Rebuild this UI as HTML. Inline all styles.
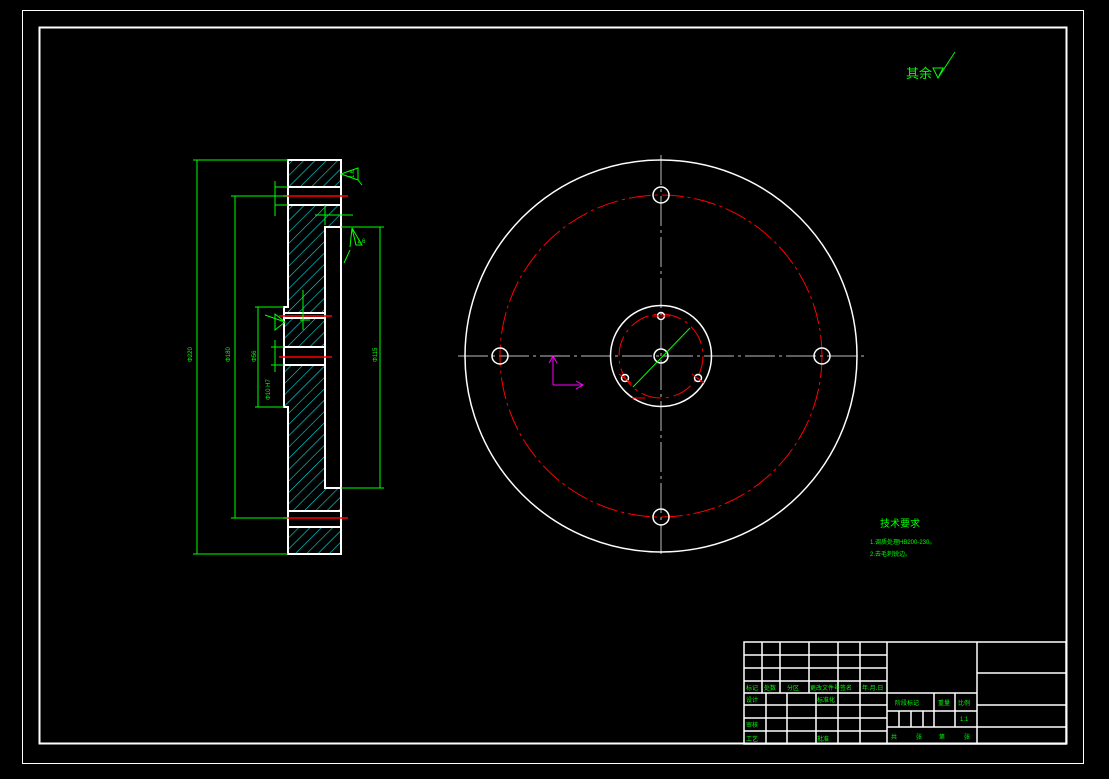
<!DOCTYPE html>
<html><head><meta charset="utf-8"><style>
html,body{margin:0;padding:0;background:#000;}
svg{display:block}
text{font-family:"Liberation Sans","Noto Sans CJK SC",sans-serif;fill:#00ff00}
</style></head><body>
<svg width="1109" height="779" viewBox="0 0 1109 779" xmlns="http://www.w3.org/2000/svg">
<defs>
<pattern id="h" width="8" height="8" patternUnits="userSpaceOnUse" patternTransform="rotate(45)">
<line x1="0" y1="0" x2="0" y2="8" stroke="#00e0e0" stroke-width="1.2"/>
</pattern>
</defs>
<rect x="0" y="0" width="1109" height="779" fill="#000"/>
<rect x="22.5" y="10.5" width="1061" height="753" fill="none" stroke="#fff" stroke-width="1"/>
<rect x="39.5" y="27.5" width="1027" height="716" fill="none" stroke="#fff" stroke-width="2"/>

<text x="906" y="78" font-size="13">其余</text>
<path d="M933 68 L943 68 L938 78 Z M938 78 L955 52" fill="none" stroke="#00ff00" stroke-width="1"/>

<g fill="url(#h)">
<rect x="288" y="160" width="53" height="27"/>
<rect x="288" y="205" width="53" height="22"/>
<rect x="288" y="227" width="37" height="80"/>
<rect x="284" y="307" width="41" height="6"/>
<rect x="284" y="318" width="41" height="29"/>
<rect x="284" y="365" width="41" height="42"/>
<rect x="288" y="407" width="37" height="81"/>
<rect x="288" y="488" width="53" height="23"/>
<rect x="288" y="527" width="53" height="27"/>
</g>
<g fill="none" stroke="#fff" stroke-width="2">
<path d="M288 160 H341 V554 H288 V407 H284 V307 H288 Z"/>
<path d="M341 227 H325 V488 H341"/>
<path d="M288 187 H341 M288 205 H341 M288 511 H341 M288 527 H341"/>
<path d="M284 313 H325 M284 318 H325 M284 347 H325 M284 365 H325"/>
</g>
<g stroke="#ff0000" stroke-width="1.5">
<line x1="283" y1="196" x2="348" y2="196"/>
<line x1="283" y1="518" x2="348" y2="518"/>
<line x1="279" y1="316" x2="332" y2="316"/>
<line x1="279" y1="357" x2="332" y2="357"/>
</g>
<g stroke="#00ff00" stroke-width="1" fill="none">
<path d="M193 160 H288 M193 554 H288 M197 160 V554"/>
<path d="M231 196 H288 M231 518 H288 M235 196 V518"/>
<path d="M255 307 H284 M255 407 H284 M258 307 V407"/>
<path d="M341 227 H384 M341 488 H384 M380 227 V488"/>
<path d="M275 181 V216 M275 187 H288 M275 205 H288"/>
<path d="M275 340 V372 M271 347 H284 M271 365 H284"/>
<path d="M315 215 H353 M325 205 V225 M303 290 V330 M300 320 H310"/>
<path d="M341 174 L358 168 V180 Z M358 180 L362 185"/>
<path d="M352 228 L362 245 L356 245 Z M352 228 L350 247 M350 250 L344 263"/>
<path d="M275 314 L285 322 L275 330 Z M265 315 L285 322"/>
</g>
<g font-size="6">
<text x="192" y="362" transform="rotate(-90 192 362)">Φ220</text>
<text x="230" y="362" transform="rotate(-90 230 362)">Φ180</text>
<text x="256" y="362" transform="rotate(-90 256 362)">Φ56</text>
<text x="377" y="362" transform="rotate(-90 377 362)">Φ115</text>
<text x="270" y="400" transform="rotate(-90 270 400)">Φ10 H7</text>
<text x="354" y="178" transform="rotate(-90 354 178)">1.6</text>
<text x="357" y="243">1.6</text>
</g>

<g stroke="#bbb" stroke-width="1" stroke-dasharray="30 4 3 4" fill="none">
<line x1="458" y1="356" x2="864" y2="356"/>
<line x1="661" y1="155" x2="661" y2="558"/>
</g>
<circle cx="661" cy="356" r="196" fill="none" stroke="#fff" stroke-width="1.5"/>
<circle cx="661" cy="356" r="161" fill="none" stroke="#ff0000" stroke-width="1" stroke-dasharray="22 4 3 4"/>
<circle cx="661" cy="356" r="50.5" fill="none" stroke="#fff" stroke-width="1.5"/>
<circle cx="661" cy="356" r="42" fill="none" stroke="#ff0000" stroke-width="1" stroke-dasharray="20 5 3 5"/>
<g fill="none" stroke="#fff" stroke-width="1.5">
<circle cx="661" cy="195" r="8"/>
<circle cx="500" cy="356" r="8"/>
<circle cx="822" cy="356" r="8"/>
<circle cx="661" cy="517" r="8"/>
<circle cx="661" cy="356" r="7"/>
<circle cx="661" cy="316" r="3.5"/>
<circle cx="625" cy="378" r="3.5"/>
<circle cx="698" cy="378" r="3.5"/>
</g>
<g stroke="#ff0000" stroke-width="1">
<line x1="652" y1="316" x2="670" y2="316"/>
<line x1="619" y1="374" x2="631" y2="383"/>
<line x1="692" y1="374" x2="704" y2="383"/>
<line x1="632" y1="398" x2="645" y2="398"/>
</g>
<line x1="633" y1="387" x2="690" y2="328" stroke="#00ff00" stroke-width="1"/>
<path d="M553 385 V356 M549 363 L553 356 L557 363 M553 385 H583 M576 381 L583 385 L576 389" fill="none" stroke="#ff00ff" stroke-width="1"/>

<text x="880" y="527" font-size="10">技术要求</text>
<text x="870" y="544" font-size="6">1.调质处理HB200-230。</text>
<text x="870" y="556" font-size="6">2.去毛刺锐边。</text>

<g stroke="#fff" stroke-width="1.5" fill="none">
<rect x="744" y="642" width="322" height="102"/>
<line x1="887" y1="642" x2="887" y2="744"/>
<line x1="977" y1="642" x2="977" y2="744"/>
<path d="M744 655 H887 M744 668 H887 M744 681 H887 M744 693 H977 M744 705 H887 M744 718 H887 M744 731 H887"/>
<path d="M762 642 V693 M780 642 V693 M809 642 V693 M838 642 V744 M860 642 V744"/>
<path d="M766 693 V744 M787 693 V744 M816 693 V744"/>
<path d="M887 711 H977 M887 727 H1066 M934 693 V727 M955 693 V727 M899 711 V727 M911 711 V727 M923 711 V727"/>
<path d="M977 673 H1066 M977 705 H1066"/>
</g>
<g font-size="6">
<text x="746" y="690">标记</text><text x="764" y="690">处数</text><text x="787" y="690">分区</text><text x="810" y="690">更改文件号</text><text x="840" y="690">签名</text><text x="862" y="690">年.月.日</text>
<text x="746" y="702">设计</text><text x="817" y="702">标准化</text>
<text x="746" y="727">审核</text><text x="746" y="741">工艺</text><text x="817" y="741">批准</text>
<text x="895" y="705">阶段标记</text><text x="938" y="705">重量</text><text x="958" y="705">比例</text>
<text x="960" y="721">1:1</text>
<text x="891" y="739">共</text><text x="916" y="739">张</text><text x="939" y="739">第</text><text x="964" y="739">张</text>
</g>
</svg>
</body></html>
